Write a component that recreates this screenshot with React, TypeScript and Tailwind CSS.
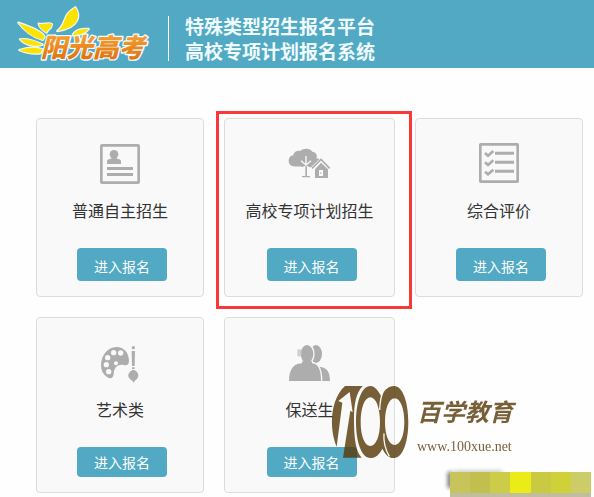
import * as React from "react";

function SunLogo() {
  return (
    <svg viewBox="48 15 402 174" className="h-[58px] w-[134px] overflow-visible" role="img" aria-label="阳光高考">
      <defs>
        <linearGradient id="logo-orange" x1="0" y1="0" x2="0" y2="1">
          <stop offset="0.2" stopColor="#f6a335" />
          <stop offset="1" stopColor="#dc6a08" />
        </linearGradient>
      </defs>
      <g fill="#ffe200" stroke="#effaff" strokeWidth="7" strokeLinejoin="round" className="[paint-order:stroke]">
        <path d="M172 93C188 82 192 64 198 50C204 36 216 30 226 22C242 44 240 84 172 93Z" />
        <path d="M55 68C88 80 124 92 134 110L128 120C100 112 76 96 55 68Z" />
        <path d="M116 71C132 76 146 64 156 73C154 88 144 86 140 98C130 92 118 84 116 71Z" />
        <path d="M60 118C84 114 108 124 128 134C104 142 76 136 60 118Z" />
        <path d="M58 150C84 142 108 140 128 148L122 160C100 162 78 160 58 150Z" />
        <path d="M218 106C226 88 244 86 266 87C256 100 240 106 218 106Z" />
      </g>
      <text
        x="122"
        y="170"
        fontSize="78"
        fill="url(#logo-orange)"
        stroke="#f4fcff"
        strokeWidth="8"
        strokeLinejoin="round"
        className="font-['Noto_Sans_CJK_SC',sans-serif] font-black italic [paint-order:stroke]"
      >
        阳光高考
      </text>
    </svg>
  );
}

function IdCardIcon() {
  return (
    <svg viewBox="210 102 120 120" className="h-10 w-10" fill="#adadad" aria-hidden="true">
      <rect x="214" y="106" width="112" height="112" rx="2" fill="none" stroke="#adadad" strokeWidth="8" />
      <ellipse cx="252" cy="133" rx="13" ry="13" />
      <path d="M231 162V154Q231 148 240 147L248 143H256L264 147Q273 148 273 154V162Z" />
      <path d="M231 171H309V180H231ZM231 189H309V198H231Z" />
    </svg>
  );
}

function VillageIcon() {
  return (
    <svg viewBox="234 117 132 120" className="h-10 w-11" fill="#adadad" aria-hidden="true">
      <path d="M252 184C231 182 231 153 250 151C251 140 264 136 271 138C280 128 302 129 307 140C319 140 323 152 319 160L330 162L303 187H299C294 181 282 182 277 186C270 183 262 186 252 184Z" />
      <path d="M273 167L288 180M288 153V182M303 167L288 180" fill="none" stroke="#f9f9f9" strokeWidth="4" />
      <path d="M286 184H291V213H300V217H276V213H286Z" />
      <path d="M305 193L333 165L360 193" fill="none" stroke="#f9f9f9" strokeWidth="11" />
      <path d="M306 190L333 163L359 190" fill="none" stroke="#adadad" strokeWidth="5" />
      <path fillRule="evenodd" d="M333 173L354 193V219H315V193ZM327 195V213H339V195ZM331 202H334V207H331Z" />
    </svg>
  );
}

function ChecklistIcon() {
  return (
    <svg viewBox="207 102 120 120" className="h-10 w-10 overflow-visible" fill="none" stroke="#adadad" aria-hidden="true">
      <rect x="211" y="103" width="112" height="112" rx="1" strokeWidth="8" />
      <path d="M255 130H312M255 157H312M255 184H312" strokeWidth="9" />
      <path d="M225 129L234 137L250 123M225 157L234 165L250 151M225 185L234 193L250 179" strokeWidth="8" />
    </svg>
  );
}

function PaletteIcon() {
  return (
    <svg viewBox="15 9 120 120" className="h-10 w-10" fill="#adadad" aria-hidden="true">
      <path d="M18 76C18 46 38 21 64 21C88 21 102 40 102 62C102 74 96 77 86 75C66 72 57 84 56 102C55 115 46 118 36 111C24 103 18 91 18 76Z" />
      <g fill="#f9f9f9">
        <circle cx="56" cy="38" r="8" />
        <circle cx="77" cy="39" r="8" />
        <circle cx="38" cy="53" r="8" />
        <circle cx="34" cy="74" r="8" />
        <circle cx="41" cy="95" r="8" />
        <circle cx="63" cy="70" r="6" />
      </g>
      <circle cx="115" cy="23" r="5" />
      <path d="M110 33H120L119 78H111ZM111 82H119V87H111ZM115 89C127 93 133 103 129 112C126 119 119 121 116 128C112 121 104 119 101 112C97 103 104 93 115 89Z" />
    </svg>
  );
}

function PeopleIcon() {
  return (
    <svg viewBox="234 99 132 120" className="h-10 w-11" fill="#adadad" aria-hidden="true">
      <ellipse cx="318" cy="132" rx="18" ry="27" />
      <path d="M325 170C349 170 360 184 360 213H325Z" />
      <g stroke="#f9f9f9" strokeWidth="8" className="[paint-order:stroke]">
        <ellipse cx="291" cy="132" rx="19" ry="27" />
        <path d="M237 213C237 176 252 160 278 160H304C324 160 333 178 333 213Z" />
      </g>
      <path d="M276 154H306V166H276Z" />
      <rect x="262" y="118" width="12" height="21" fill="#cfcfcf" />
    </svg>
  );
}

const programs = [
  { title: "普通自主招生", icon: <IdCardIcon /> },
  { title: "高校专项计划招生", icon: <VillageIcon />, featured: true },
  { title: "综合评价", icon: <ChecklistIcon /> },
  { title: "艺术类", icon: <PaletteIcon />, compact: true },
  { title: "保送生", icon: <PeopleIcon />, compact: true },
];

type Program = {
  title: string;
  icon: React.ReactNode;
  featured?: boolean;
  compact?: boolean;
};

function ProgramCard({ title, icon, featured, compact }: Program) {
  return (
    <section className="relative flex flex-col items-center rounded border border-[#dcdcdc] bg-[#f9f9f9] pt-[25px] pb-[15px]">
      {icon}
      <h2 className="mt-[14px] text-base leading-6 whitespace-nowrap text-[#333]">{title}</h2>
      <div className="mt-[26px] flex w-full justify-center pl-1">
        <button
          type="button"
          aria-label={`${title} 进入报名`}
          className={`rounded bg-[#51a9c3] px-[17px] text-sm text-white ${compact ? "h-[30px]" : "h-[33px] pt-[2px]"}`}
        >
          进入报名
        </button>
      </div>
      {featured && (
        <div className="pointer-events-none absolute -top-2 -right-[18px] -bottom-[13px] -left-[9px] border-3 border-[#fb3838]" />
      )}
    </section>
  );
}

function Watermark() {
  return (
    <div className="pointer-events-none absolute top-[385px] left-[331px] flex gap-2">
      <svg viewBox="18 15 234 222" className="h-[74px] w-[78px]" aria-label="100" role="img">
        <g fill="#563906" fillRule="evenodd" opacity="0.8">
          <path d="M60 18H113C92 40 87 75 87 118C87 175 92 215 110 233H54L76 92L83 97L74 36L40 63L52 68L35 200C13 150 13 60 60 18Z" />
          <path d="M136 18C149 18 160 32 168 48C178 30 191 18 207 18C233 18 250 66 250 126C250 186 233 234 207 234C191 234 181 224 172 206C163 224 151 234 136 234C110 234 93 186 93 126C93 66 110 18 136 18ZM136 52C119 52 107 84 107 126C107 168 119 198 136 198C153 198 165 168 165 126C165 84 153 52 136 52ZM209 55C192 55 180 86 180 126C180 166 192 195 209 195C226 195 238 166 238 126C238 86 226 55 209 55Z" />
        </g>
        <path d="M178 28C169 42 165 62 164 90M177 160C175 182 181 208 193 229" fill="none" stroke="#f9f9f9" strokeWidth="4" />
      </svg>
      <div className="flex flex-col text-[#563906] opacity-80">
        <p className="text-2xl leading-[52px] font-bold italic">百学教育</p>
        <p className="font-['Liberation_Serif',serif] text-sm leading-5">www.100xue.net</p>
      </div>
    </div>
  );
}

function MosaicStrip() {
  return (
    <div className="pointer-events-none absolute right-[3px] bottom-0 flex h-[25px] w-[141px]">
      <div className="absolute top-0 -left-[2px] h-4 w-1 bg-[#555] blur-[2px]" />
      <div className="absolute -top-px left-1 h-1 w-12 bg-[#bbb] blur-[2px]" />
      <div className="relative grid flex-1 grid-cols-7 border-b-4 border-[#bfbfa0]">
        <span className="bg-[#c6c45a]" />
        <span className="bg-[#c1c04e]" />
        <span className="bg-[#cdcc49]" />
        <span className="bg-[#ebeb17]" />
        <span className="bg-[#c9c942]" />
        <span className="bg-[#d0d038]" />
        <span className="bg-[#cccc69]" />
      </div>
    </div>
  );
}

export default function App() {
  return (
    <div className="relative bg-[#fefefe] font-['Noto_Sans_CJK_SC',sans-serif]">
      <header className="flex h-[68px] bg-[#51a9c3] pl-4">
        <div className="pt-[5px]">
          <SunLogo />
        </div>
        <div className="mt-4 ml-[18px] h-[45px] w-px bg-white" />
        <h1 className="ml-4 pt-[13px] text-[19px] leading-[25px] font-bold whitespace-nowrap text-[#f0fbff]">
          特殊类型招生报名平台
          <br />
          高校专项计划报名系统
        </h1>
      </header>

      <main className="grid grid-cols-[168fr_171fr_168fr] gap-5 pt-[50px] pr-[11px] pb-1 pl-9">
        {programs.map((program) => (
          <ProgramCard key={program.title} {...program} />
        ))}
      </main>

      <Watermark />
      <MosaicStrip />
    </div>
  );
}
